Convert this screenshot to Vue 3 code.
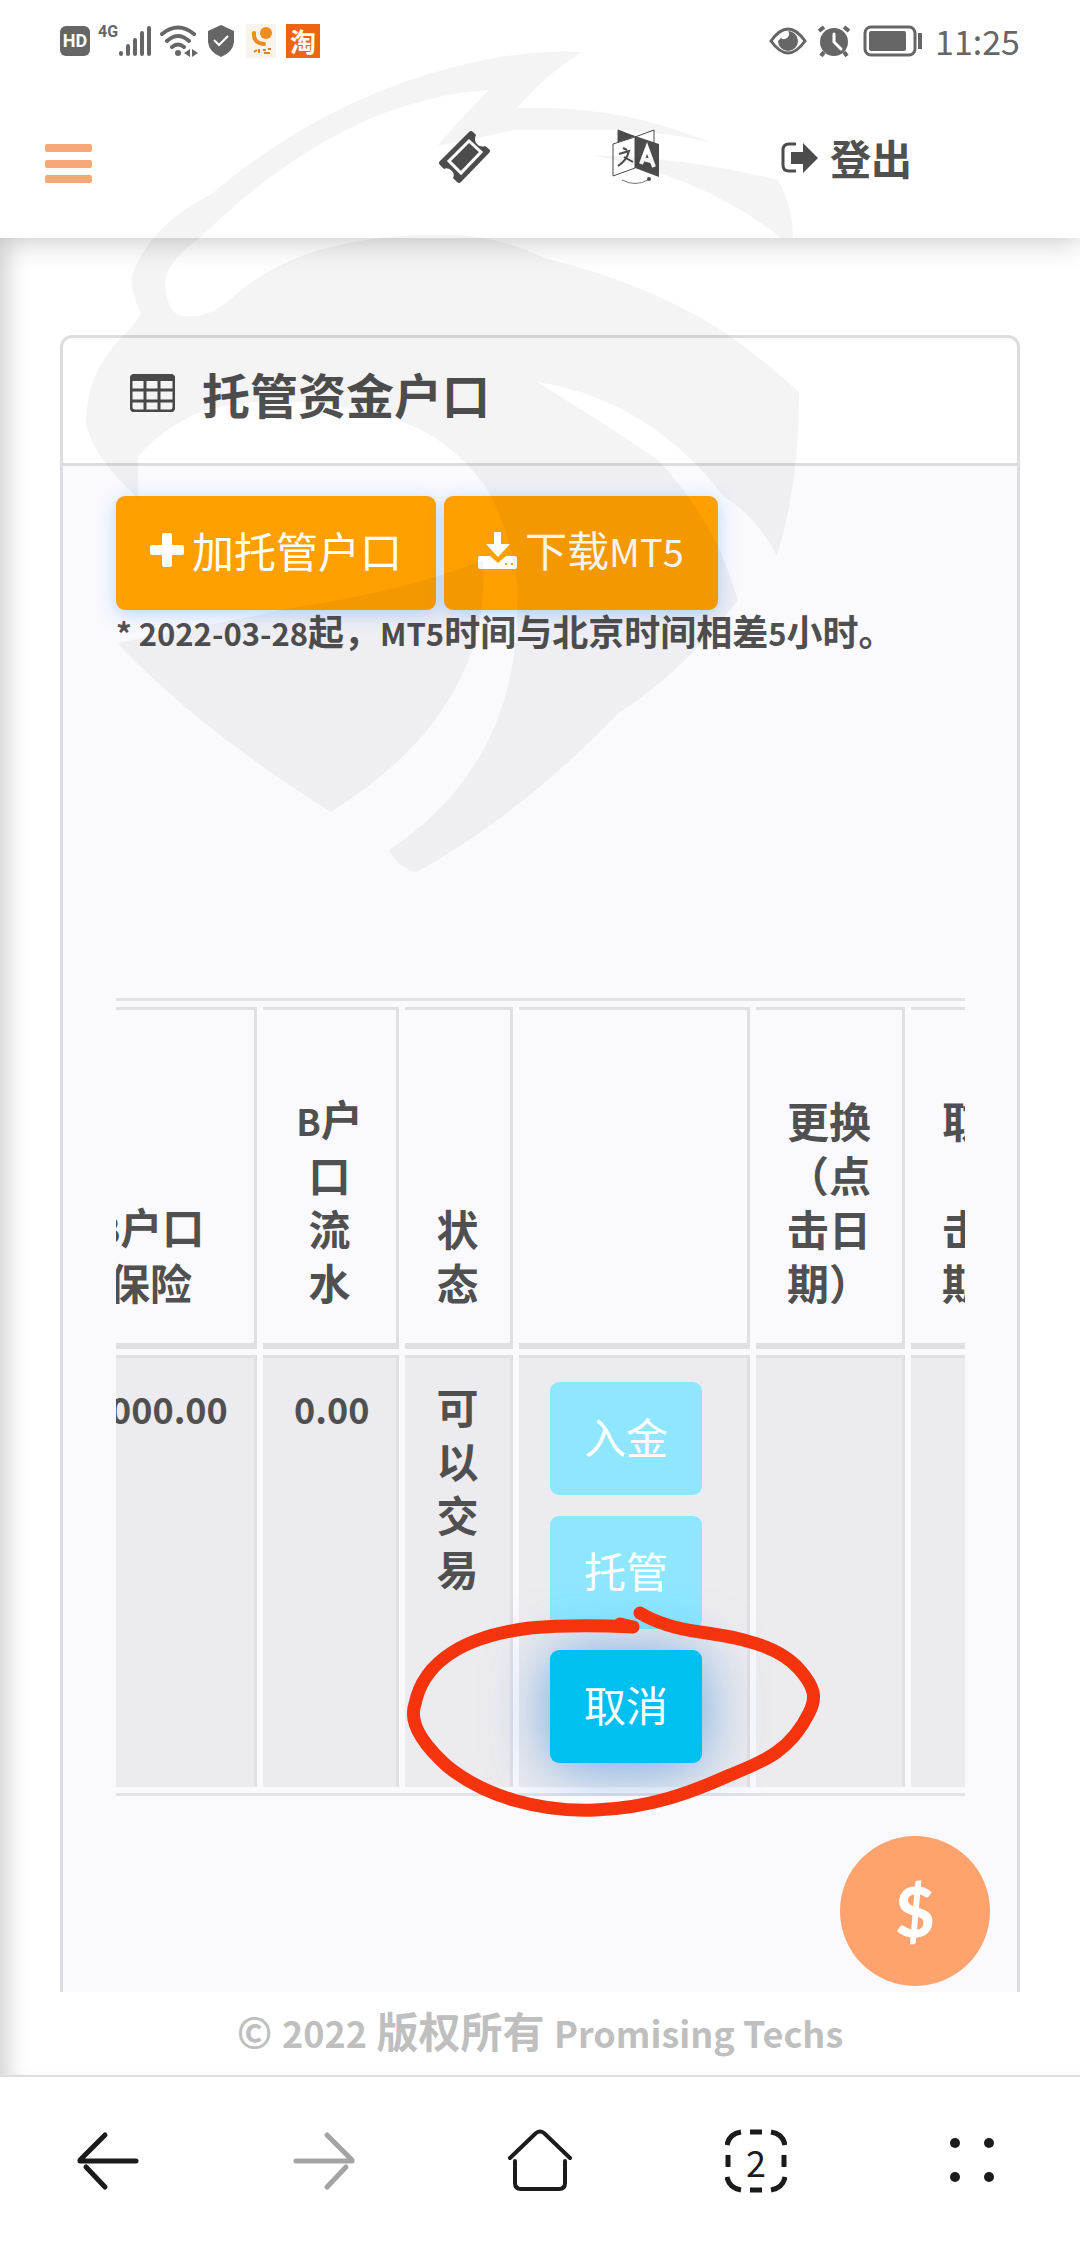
<script setup>
import { onMounted, ref } from 'vue'

const scroller = ref(null)
const scrolledBy = 76

const columns = [
  { key: 'insurance', width: 211 },
  { key: 'turnover', width: 136 },
  { key: 'state', width: 108 },
  { key: 'actions', width: 231 },
  { key: 'change', width: 149 },
  { key: 'cancel', width: 149 }
]

onMounted(() => {
  scroller.value.scrollLeft = scrolledBy
})
</script>

<template>
  <div class="app">
    <div class="status">
      <div class="status-group">
        <span class="hd">HD</span>
        <span class="net">4G</span>
        <svg class="signal" width="34" height="32" viewBox="0 0 34 32">
          <g stroke="#666" stroke-width="4" stroke-linecap="round">
            <path d="M3 28v1M10 21v8M17 15v14M24 8v21M31 3v26" />
          </g>
        </svg>
        <svg class="wifi" width="38" height="32" viewBox="0 0 38 32">
          <g fill="none" stroke="#666" stroke-width="4" stroke-linecap="round">
            <path d="M2 9Q18-4 34 9M7 16Q18 6 29 16M12 22Q18 17 24 22" />
          </g>
          <circle cx="18" cy="28" r="3" fill="#666" />
          <path d="M30 24v8l-6-4zM32 24v8l6-4z" fill="#666" />
        </svg>
        <svg class="shield" width="26" height="32" viewBox="0 0 26 32">
          <path d="M13 0L26 6V17Q25 27 13 32Q1 27 0 17V6z" fill="#666" />
          <path d="M6 15l5 5 9-9" fill="none" stroke="#fff" stroke-width="2" />
        </svg>
        <svg class="call" width="30" height="34" viewBox="0 0 30 34">
          <rect width="30" height="34" fill="#f8f4ec" />
          <circle cx="20" cy="9" r="6" fill="#f08c1e" />
          <path d="M8 9Q7 19 18 20" fill="none" stroke="#ef8a1d" stroke-width="4" stroke-linecap="round" />
          <path d="M8 28l3-2M13 25v4M17 26h3M22 25h3M18 29h6" stroke="#d9832b" stroke-width="2" />
        </svg>
        <span class="tao">淘</span>
      </div>
      <div class="status-group">
        <svg class="eye" width="38" height="28" viewBox="0 0 38 28">
          <path d="M2 14Q19-10 36 14Q19 38 2 14z" fill="none" stroke="#666" stroke-width="3" />
          <path d="M19 4a10 10 0 1 1-10 10l3-3a5 5 0 0 0 7-7z" fill="#666" />
        </svg>
        <svg class="alarm" width="34" height="32" viewBox="0 0 34 32">
          <circle cx="17" cy="17" r="14" fill="#666" />
          <path d="M2 6l5-4M32 6l-5-4M7 27l-3 4M27 27l3 4" stroke="#666" stroke-width="4" />
          <path d="M17 9v8l7 7" fill="none" stroke="#fff" stroke-width="3" stroke-linecap="round" />
        </svg>
        <svg class="battery" width="60" height="32" viewBox="0 0 60 32">
          <rect x="2" y="2" width="50" height="28" rx="6" fill="none" stroke="#666" stroke-width="3" />
          <rect x="6" y="6" width="37" height="20" rx="2" fill="#666" />
          <path d="M57 8v16" stroke="#666" stroke-width="4" />
        </svg>
        <time class="clock">11:25</time>
      </div>
    </div>

    <header class="topbar">
      <button class="icon-button" type="button" aria-label="菜单">
        <svg width="47" height="51" viewBox="0 0 47 51" fill="#f5a878">
          <rect y="12" width="47" height="8" rx="2" />
          <rect y="28" width="47" height="8" rx="2" />
          <rect y="43" width="47" height="8" rx="2" />
        </svg>
      </button>
      <nav class="tools">
        <button class="icon-button" type="button" aria-label="票券">
          <svg width="52" height="52" viewBox="0 0 52 52">
            <path d="M30 1Q32-1 34 1L37 4Q35 8 37 12Q41 17 46 15L50 18Q52 20 50 22L22 51Q20 53 18 51L14 47Q16 43 13 40Q9 36 5 38L1 34Q-1 32 1 30z" fill="#4c4c4c" />
            <path d="M30 10L42 21L22 42L10 30z" fill="none" stroke="#fff" stroke-width="3" />
          </svg>
        </button>
        <button class="icon-button" type="button" aria-label="语言">
          <svg width="48" height="56" viewBox="0 0 48 56">
            <path d="M6 1L23 8L42 1V14M6 1V14" fill="none" stroke="#4c4c4c" />
            <path d="M6 1L23 7L12 12L6 14z" fill="#4c4c4c" />
            <path d="M23 8L1 15V47L23 39z" fill="#fff" stroke="#4c4c4c" />
            <path d="M23 7L47 15V48L23 39z" fill="#4c4c4c" />
            <path d="M11 19l4 2M7 25l10-3Q15 31 6 37M12 28l9 5" fill="none" stroke="#4c4c4c" stroke-width="2" />
            <path d="M29 35l6-16 7 19M31 30l8 2" fill="none" stroke="#fff" stroke-width="4" />
            <path d="M10 51Q23 58 36 51" fill="none" stroke="#777" />
            <circle cx="37" cy="50" r="2" fill="#4c4c4c" />
          </svg>
        </button>
        <a class="logout" href="#logout">
          <svg width="37" height="31" viewBox="0 0 37 31">
            <path d="M15 2H8Q2 2 2 8V23Q2 29 8 29H15" fill="none" stroke="#4c4c4c" stroke-width="3" />
            <path d="M10 10H22V1L37 16L22 31V22H10z" fill="#4c4c4c" />
          </svg>
          登出
        </a>
      </nav>
    </header>

    <main class="page">
      <section class="card">
        <h1 class="card-title">
          <svg width="45" height="38" viewBox="0 0 45 38">
            <rect x="1" y="1" width="43" height="36" rx="4" fill="none" stroke="#4c4c4c" stroke-width="3" />
            <path d="M1 4H44" stroke="#4c4c4c" stroke-width="6" />
            <path d="M2 16H43M2 27H43M15 4V37M29 4V37" stroke="#4c4c4c" stroke-width="3" />
          </svg>
          托管资金户口
        </h1>
        <div class="card-body">
          <div class="actions">
            <button class="primary" type="button">
              <svg width="34" height="34" viewBox="0 0 34 34"><path d="M12 2Q12 0 14 0H20Q22 0 22 2V12H32Q34 12 34 14V20Q34 22 32 22H22V32Q22 34 20 34H14Q12 34 12 32V22H2Q0 22 0 20V14Q0 12 2 12H12z" fill="#fff" /></svg>
              加托管户口
            </button>
            <button class="primary" type="button">
              <svg width="39" height="37" viewBox="0 0 39 37">
                <path d="M16 0H23V12H32L20 25L8 12H16zM2 24H12L20 31L28 24H37Q39 24 39 26V35Q39 37 37 37H2Q0 37 0 35V26Q0 24 2 24z" fill="#fff" />
                <path d="M27 32h2M33 32h2" stroke="#f90" stroke-width="2" />
              </svg>
              <span>下载<span class="latin-light">MT5</span></span>
            </button>
          </div>
          <p class="note"><span class="latin">* 2022-03-28</span>起，<span class="latin">MT5</span>时间与北京时间相差<span class="latin">5</span>小时。</p>

          <div ref="scroller" class="scroller">
            <table>
              <colgroup>
                <col v-for="c in columns" :key="c.key" :style="{ width: c.width + 'px' }" />
              </colgroup>
              <thead>
                <tr>
                  <th scope="col"><span class="latin">B</span>户口<br />保险</th>
                  <th scope="col"><span class="latin">B</span>户<br />口<br />流<br />水</th>
                  <th scope="col">状态</th>
                  <th scope="col" aria-label="操作"></th>
                  <th scope="col">更换（点击日期）</th>
                  <th scope="col">取消（点击日期）</th>
                </tr>
              </thead>
              <tbody>
                <tr>
                  <td><span class="latin">5,000.00</span></td>
                  <td><span class="latin">0.00</span></td>
                  <td>可以交易</td>
                  <td>
                    <div class="stack">
                      <button class="info" type="button" disabled>入金</button>
                      <button class="info" type="button" disabled>托管</button>
                      <button class="info" type="button">取消</button>
                    </div>
                  </td>
                  <td></td>
                  <td></td>
                </tr>
              </tbody>
            </table>
          </div>
        </div>
      </section>
      <button class="fab" type="button" aria-label="资金">$</button>
      <footer class="copyright">© <span class="latin">2022</span> 版权所有 <span class="latin">Promising Techs</span></footer>
    </main>

    <nav class="browser">
      <button type="button" aria-label="后退">
        <svg width="64" height="64" viewBox="0 0 64 64" fill="none" stroke="#1b1b1b" stroke-width="5" stroke-linecap="round">
          <path d="M4 32H60M4 31L29 6" /><path d="M10 38L29 58" />
        </svg>
      </button>
      <button type="button" aria-label="前进">
        <svg width="64" height="64" viewBox="0 0 64 64" fill="none" stroke="#a4a4a4" stroke-width="5" stroke-linecap="round">
          <path d="M4 32H60M60 31L35 6" /><path d="M54 38L35 58" />
        </svg>
      </button>
      <button type="button" aria-label="主页">
        <svg width="66" height="64" viewBox="0 0 66 64" fill="none" stroke="#1b1b1b" stroke-width="4" stroke-linecap="round">
          <path d="M3 29L29 4Q33 1 37 4L63 29M8 32V54Q8 60 14 60H52Q58 60 58 54V32" />
        </svg>
      </button>
      <button type="button" aria-label="标签页">
        <span class="tabs">
          <svg width="62" height="64" viewBox="0 0 62 64" fill="none" stroke="#1b1b1b" stroke-width="5">
            <path d="M2 16Q4 5 16 3M46 3Q58 5 60 16M60 48Q58 59 46 61M16 61Q4 59 2 48M25 3h12M25 61h12M3 26v12M59 26v12" />
          </svg>
          <span class="tab-count">2</span>
        </span>
      </button>
      <button type="button" aria-label="更多">
        <svg width="64" height="64" viewBox="0 0 64 64" fill="#1b1b1b">
          <circle cx="15" cy="14" r="5" /><circle cx="49" cy="14" r="5" />
          <circle cx="15" cy="48" r="5" /><circle cx="49" cy="48" r="5" />
        </svg>
      </button>
    </nav>

    <svg class="overlay" width="1080" height="2000" viewBox="0 0 1080 2000" aria-hidden="true">
      <g fill="#000" fill-opacity="0.042">
        <path d="M582 52Q545 75 517 108Q620 104 712 143Q650 128 580 130L516 130Q475 138 437 146Q464 115 489 90Q340 100 200 238Q165 262 165 285Q168 320 190 316Q208 318 232 298Q275 258 344 244Q400 232 461 235Q510 240 544 258Q655 285 730 336Q770 365 799 392Q800 480 777 556Q755 515 724 497Q650 400 537 382Q615 430 658 460Q715 520 738 600Q685 670 620 712Q520 815 417 872Q400 870 389 850Q525 760 517 585Q512 535 486 487Q440 425 372 414Q280 390 200 412Q160 430 138 457V498Q95 460 86 425Q85 375 120 339Q135 325 141 313Q130 293 132 275Q150 225 210 195Q340 85 500 57Q545 50 582 52z" />
        <path d="M117 643Q210 625 297 607Q410 590 483 560Q493 710 331 812Q200 730 117 643z" />
        <path d="M592 155Q690 158 778 180Q793 205 793 238H781Q710 180 592 155z" />
      </g>
      <path d="M640 1613C660 1625 685 1630 700 1632Q735 1637 747 1641Q782 1650 799 1669C815 1687 817 1698 809 1713C790 1752 762 1762 730 1775C690 1793 650 1808 595 1810C540 1812 485 1797 447 1766C416 1738 410 1718 415 1704C424 1660 467 1636 530 1628C565 1625 590 1625 633 1627L620 1624" fill="none" stroke="#f5340e" stroke-width="13" stroke-linecap="round" stroke-linejoin="round" />
    </svg>
  </div>
</template>

<style>
body {
  margin: 0;
  background: #fff;
}
</style>

<style scoped>
.app {
  position: relative;
  display: flex;
  flex-direction: column;
  min-height: 100vh;
  overflow: hidden;
  background: #fff;
  color: #505050;
  font-family: "Noto Sans CJK SC", "Noto Sans", sans-serif;
  font-size: 42px;
  line-height: 54px;
}

button {
  margin: 0;
  padding: 0;
  border: 0;
  background: none;
  color: inherit;
  font: inherit;
}

svg {
  display: block;
  flex: none;
}

.latin {
  font-size: 36px;
}

.latin-light {
  font-size: 38px;
}

.status {
  position: relative;
  z-index: 2;
  display: flex;
  align-items: center;
  justify-content: space-between;
  height: 82px;
  padding: 0 60px;
  background: #fff;
  color: #666;
}

.status-group {
  display: flex;
  align-items: center;
}

.hd {
  width: 30px;
  border-radius: 6px;
  background: #666;
  color: #fff;
  font: 700 18px/30px Roboto, sans-serif;
  text-align: center;
}

.net {
  align-self: flex-start;
  width: 20px;
  margin-left: 8px;
  font: 700 16px/16px Roboto, sans-serif;
}

.wifi {
  margin-left: 8px;
}

.shield,
.alarm,
.tao {
  margin-left: 10px;
}

.call {
  margin-left: 12px;
}

.tao {
  width: 34px;
  background: #ef6410;
  color: #fff;
  font-size: 26px;
  font-weight: 700;
  line-height: 34px;
  text-align: center;
}

.battery,
.clock {
  margin-left: 12px;
}

.clock {
  font-size: 34px;
}

.topbar {
  position: relative;
  z-index: 1;
  display: flex;
  align-items: center;
  justify-content: space-between;
  height: 156px;
  box-sizing: border-box;
  padding: 0 168px 6px 45px;
  background: #fff;
  box-shadow: 0 4px 28px rgba(0, 0, 0, 0.2);
}

.tools {
  display: flex;
  align-items: center;
  gap: 121px;
}

.logout {
  display: flex;
  align-items: center;
  gap: 12px;
  color: inherit;
  font-size: 41px;
  font-weight: 700;
  text-decoration: none;
}

.page {
  position: relative;
  display: flex;
  flex: 1;
  flex-direction: column;
  padding: 97px 60px 0;
  box-shadow: inset 24px 0 24px -18px rgba(0, 0, 0, 0.2);
}

.card {
  flex: 1;
  border: 3px solid #dddde0;
  border-bottom: 0;
  border-radius: 12px 12px 0 0;
}

.card-title {
  display: flex;
  align-items: center;
  gap: 27px;
  height: 128px;
  box-sizing: border-box;
  margin: 0;
  padding: 0 67px 16px;
  border-bottom: 3px solid #dddde0;
  font-size: 48px;
  font-weight: 700;
}

.card-body {
  box-sizing: border-box;
  min-height: 1526px;
  padding: 30px 52px 0 53px;
  background: #f9f9fe;
}

.actions {
  display: flex;
  gap: 8px;
}

.primary {
  display: flex;
  align-items: center;
  gap: 8px;
  height: 114px;
  padding: 0 34px 6px;
  border-radius: 9px;
  background: #ff9f00;
  box-shadow: 0 4px 18px rgba(70, 150, 240, 0.35);
  color: #fff;
}

.note {
  margin: 0 0 345px;
  font-size: 36px;
  font-weight: 700;
  line-height: 40px;
}

.note .latin {
  font-size: 31px;
}

.scroller {
  overflow-x: auto;
  scrollbar-width: none;
}

table {
  width: 1026px;
  table-layout: fixed;
  border-collapse: separate;
  border-spacing: 6px;
  border-top: 3px solid #e3e2e7;
  border-bottom: 3px solid #e3e2e7;
  font-weight: 700;
}

th,
td {
  box-sizing: border-box;
  padding: 21px 31px 24px;
  border: 0 solid #e0dfe4;
  border-width: 3px 3px 0 0;
  text-align: center;
  vertical-align: top;
}

th {
  height: 342px;
  padding-bottom: 34px;
  border-bottom-width: 6px;
  vertical-align: bottom;
}

td {
  background: #ecebef;
}

.stack {
  display: flex;
  flex-direction: column;
  align-items: flex-start;
  gap: 21px;
  padding-top: 3px;
  font-weight: 400;
}

.info {
  height: 113px;
  padding: 0 34px 6px;
  border-radius: 9px;
  background: #00c0f1;
  box-shadow: 0 4px 60px rgba(0, 110, 210, 0.55);
  color: #fff;
}

.info:disabled {
  background: #8ee7ff;
  box-shadow: none;
}

.fab {
  position: absolute;
  right: 90px;
  bottom: 89px;
  width: 150px;
  height: 150px;
  border-radius: 50%;
  background: #ffa36e;
  color: #fff;
  font: 900 68px/146px Lato, sans-serif;
}

.copyright {
  height: 83px;
  color: #bfbfbf;
  font-weight: 700;
  line-height: 76px;
  text-align: center;
}

.browser {
  display: flex;
  align-items: center;
  height: 169px;
  box-sizing: border-box;
  border-top: 2px solid #dedede;
  background: #fff;
}

.browser button {
  display: flex;
  flex: 1;
  justify-content: center;
}

.tabs {
  display: grid;
  place-items: center;
}

.tabs > * {
  grid-area: 1 / 1;
}

.tab-count {
  color: #1b1b1b;
  font: 400 36px/60px "Noto Sans CJK SC", sans-serif;
}

.overlay {
  position: absolute;
  z-index: 3;
  top: 0;
  left: 0;
  pointer-events: none;
}
</style>
